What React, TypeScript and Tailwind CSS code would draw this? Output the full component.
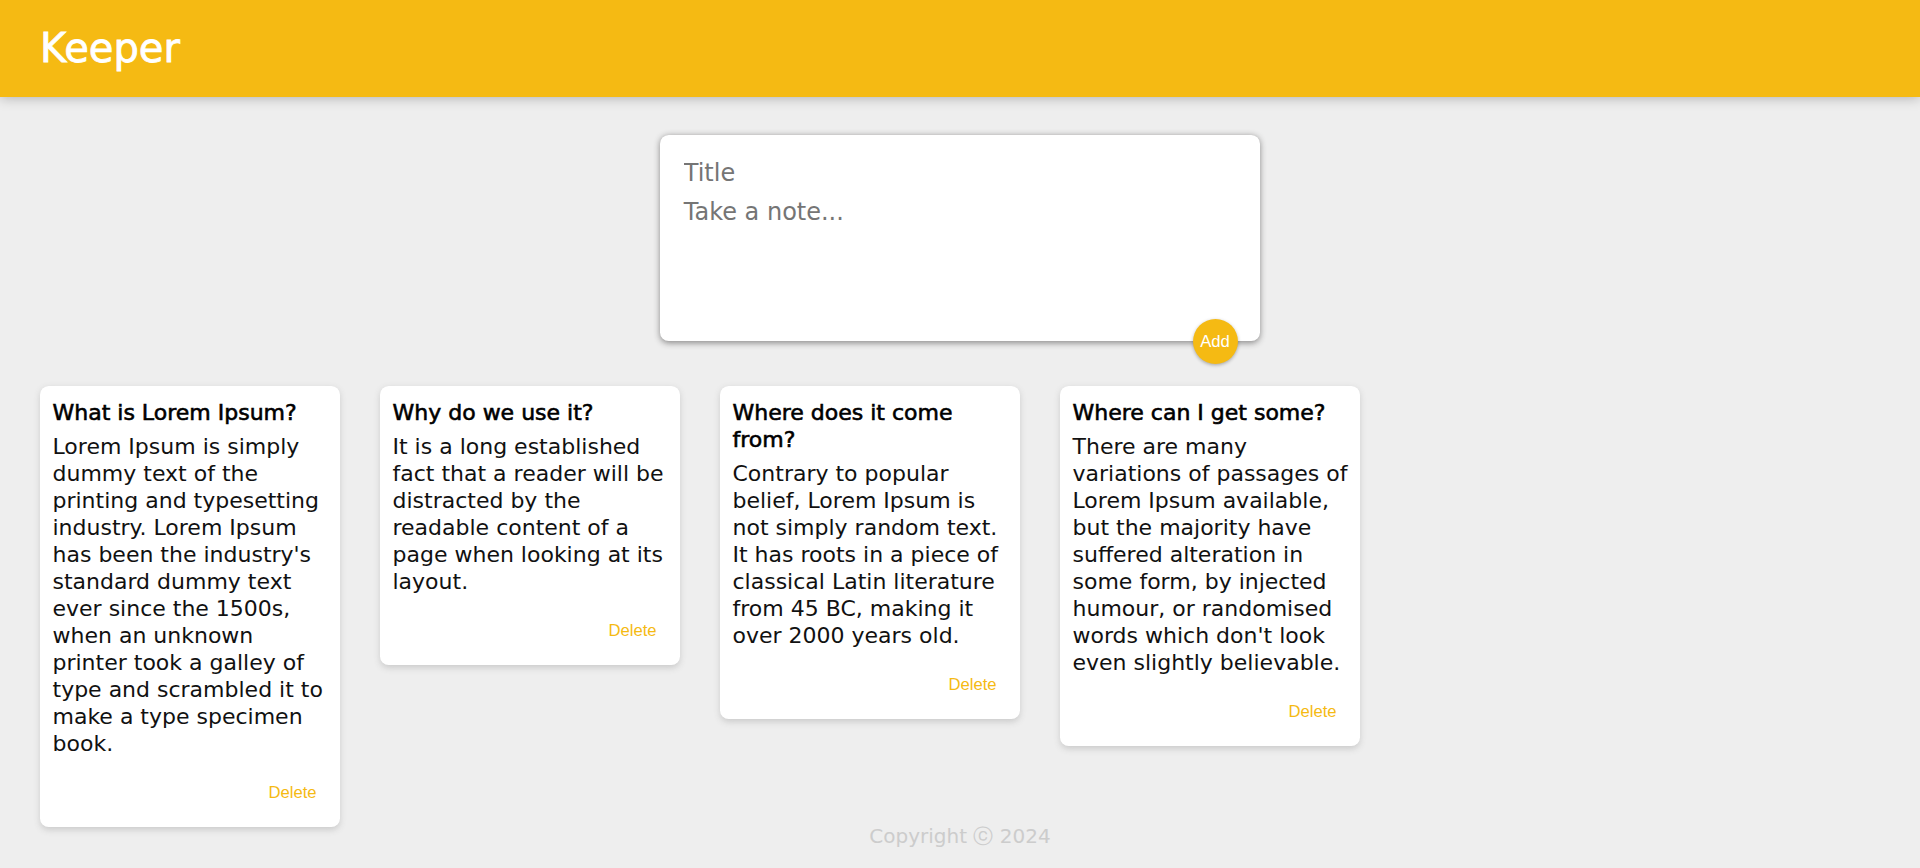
import React from "react";

type Note = { id: number; title: string; content: string };

const notes: Note[] = [
  {
    id: 1,
    title: "What is Lorem Ipsum?",
    content:
      "Lorem Ipsum is simply dummy text of the printing and typesetting industry. Lorem Ipsum has been the industry's standard dummy text ever since the 1500s, when an unknown printer took a galley of type and scrambled it to make a type specimen book.",
  },
  {
    id: 2,
    title: "Why do we use it?",
    content:
      "It is a long established fact that a reader will be distracted by the readable content of a page when looking at its layout.",
  },
  {
    id: 3,
    title: "Where does it come from?",
    content:
      "Contrary to popular belief, Lorem Ipsum is not simply random text. It has roots in a piece of classical Latin literature from 45 BC, making it over 2000 years old.",
  },
  {
    id: 4,
    title: "Where can I get some?",
    content:
      "There are many variations of passages of Lorem Ipsum available, but the majority have suffered alteration in some form, by injected humour, or randomised words which don't look even slightly believable.",
  },
];

function Header() {
  return (
    <header className="relative z-10 shrink-0 bg-[#f5ba13] px-10 py-5 shadow-[0_0_12.5px_0_rgba(0,0,0,0.3)]">
      <h1 className="font-['DejaVu_Sans',sans-serif] text-[40px] leading-[57px] font-normal text-white [-webkit-text-stroke:0.8px_#fff]">
        Keeper
      </h1>
    </header>
  );
}

function CreateArea() {
  return (
    <form
      className="relative mx-auto mt-[37.5px] mb-[25px] w-[600px] rounded-[8.75px] bg-white p-[18.75px] shadow-[0_1.25px_6.25px_rgb(138,137,137)]"
      onSubmit={(e) => e.preventDefault()}
    >
      <input
        name="title"
        placeholder="Title"
        className="block h-[39.3px] w-full p-[5px] text-[24px] outline-none placeholder:text-[#757575]"
      />
      <textarea
        name="content"
        placeholder="Take a note..."
        rows={3}
        className="block h-[130px] w-full resize-none p-[5px] text-[24px] leading-[29.3px] outline-none placeholder:text-[#757575]"
      />
      <button
        type="submit"
        className="absolute right-[22.5px] bottom-[-22.5px] flex h-[45px] w-[45px] items-center justify-center rounded-full bg-[#f5ba13] font-['Liberation_Sans',Arial,sans-serif] text-[16.67px] text-white shadow-[0_1.25px_3.75px_rgba(0,0,0,0.3)]"
      >
        Add
      </button>
    </form>
  );
}

function NoteCard({ note }: { note: Note }) {
  return (
    <div className="m-5 w-[300px] rounded-[8.75px] bg-white p-[12.5px] shadow-[0_2.5px_6.25px_#ccc]">
      <h1 className="mb-[7.5px] text-[22px] leading-[27px] font-normal text-black [-webkit-text-stroke:0.6px_#000]">
        {note.title}
      </h1>
      <p className="mb-[12.5px] text-[22px] leading-[27px] break-words whitespace-pre-wrap text-[#111]">
        {note.content}
      </p>
      <div className="flex justify-end">
        <button className="mr-[12.5px] flex h-[45px] w-[45px] items-center justify-center bg-white font-['Liberation_Sans',Arial,sans-serif] text-[16.67px] text-[#f5ba13]">
          Delete
        </button>
      </div>
    </div>
  );
}

export default function App() {
  return (
    <div className="flex h-screen flex-col overflow-hidden bg-[#eeeeee] font-['DejaVu_Sans',sans-serif]">
      <Header />
      <main className="min-h-0 flex-1 px-5">
        <CreateArea />
        <div className="flex flex-wrap items-start">
          {notes.map((note) => (
            <NoteCard key={note.id} note={note} />
          ))}
        </div>
      </main>
      <footer className="h-[50px] shrink-0 pt-[6px] text-center">
        <p className="text-[20px] leading-[24px] text-[#cccccc]">
          Copyright ⓒ 2024
        </p>
      </footer>
    </div>
  );
}
